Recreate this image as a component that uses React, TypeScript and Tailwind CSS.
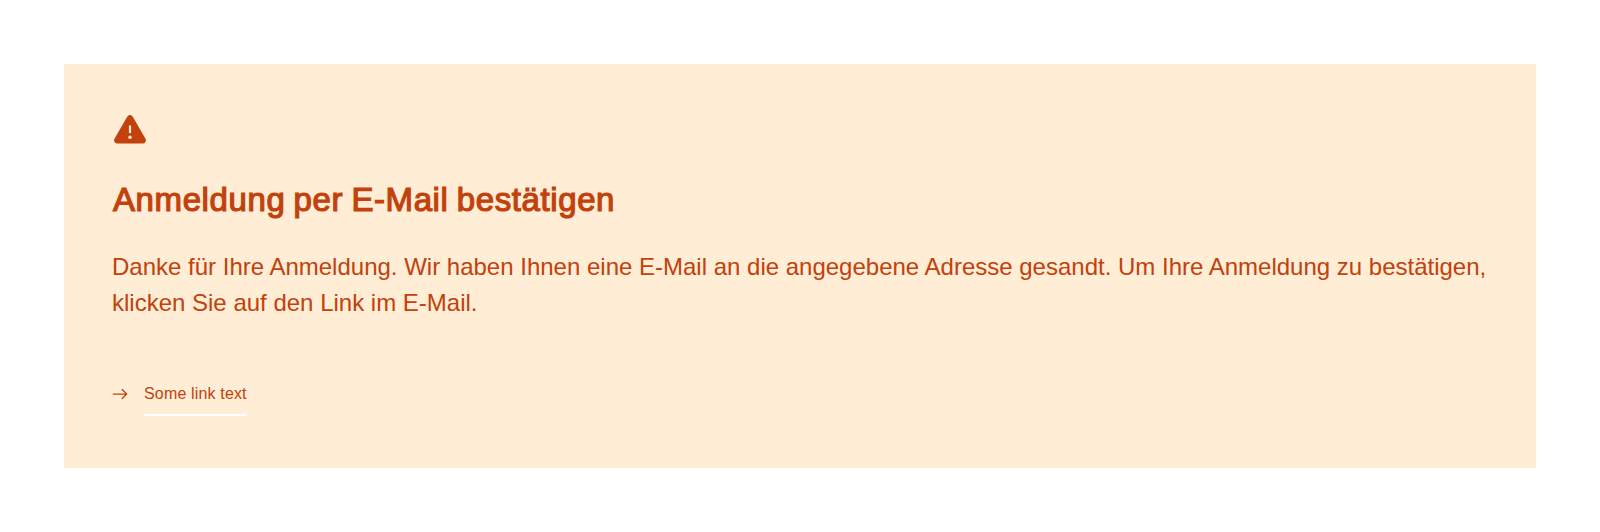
export default function App() {
  return (
    <div className="bg-white p-16">
      <section className="flex h-[404px] flex-col items-start bg-[#ffedd5] p-12 font-['Liberation_Sans',sans-serif] text-[#c2410c]">
        <svg className="h-9 w-9" viewBox="0 0 36 36" aria-hidden="true">
          <path
            fill="currentColor"
            d="M15.2 4.7a3.2 3.2 0 0 1 5.6 0l12.7 22a3.3 3.3 0 0 1-2.9 4.9H5.4a3.3 3.3 0 0 1-2.9-4.9z"
          />
          <path d="M18 14.4v5.8" stroke="#ffedd5" strokeWidth="2.2" strokeLinecap="round" />
          <circle cx="18" cy="25.3" r="1.7" fill="#ffedd5" />
        </svg>
        <h1 className="mt-[30px] pl-px text-[33px] leading-[44px] font-normal tracking-[0.6px] [word-spacing:-1.5px] [-webkit-text-stroke:1.2px_#c2410c]">
          Anmeldung per E-Mail bestätigen
        </h1>
        <p className="mt-[27px] text-2xl leading-9">
          Danke für Ihre Anmeldung. Wir haben Ihnen eine E-Mail an die angegebene Adresse gesandt. Um Ihre
          Anmeldung zu bestätigen, klicken Sie auf den Link im E-Mail.
        </p>
        <a className="mt-[61px] flex items-start gap-4 text-base tracking-[0.01em]">
          <svg
            className="mt-1 h-4 w-4"
            viewBox="0 0 16 16"
            fill="none"
            stroke="currentColor"
            strokeWidth="1.25"
            strokeLinecap="round"
            strokeLinejoin="round"
            aria-hidden="true"
          >
            <path d="M1.2 8h13.4M10.2 3.5 14.7 8l-4.5 4.5" />
          </svg>
          <span className="border-b-2 border-white pb-2">Some link text</span>
        </a>
      </section>
    </div>
  );
}
